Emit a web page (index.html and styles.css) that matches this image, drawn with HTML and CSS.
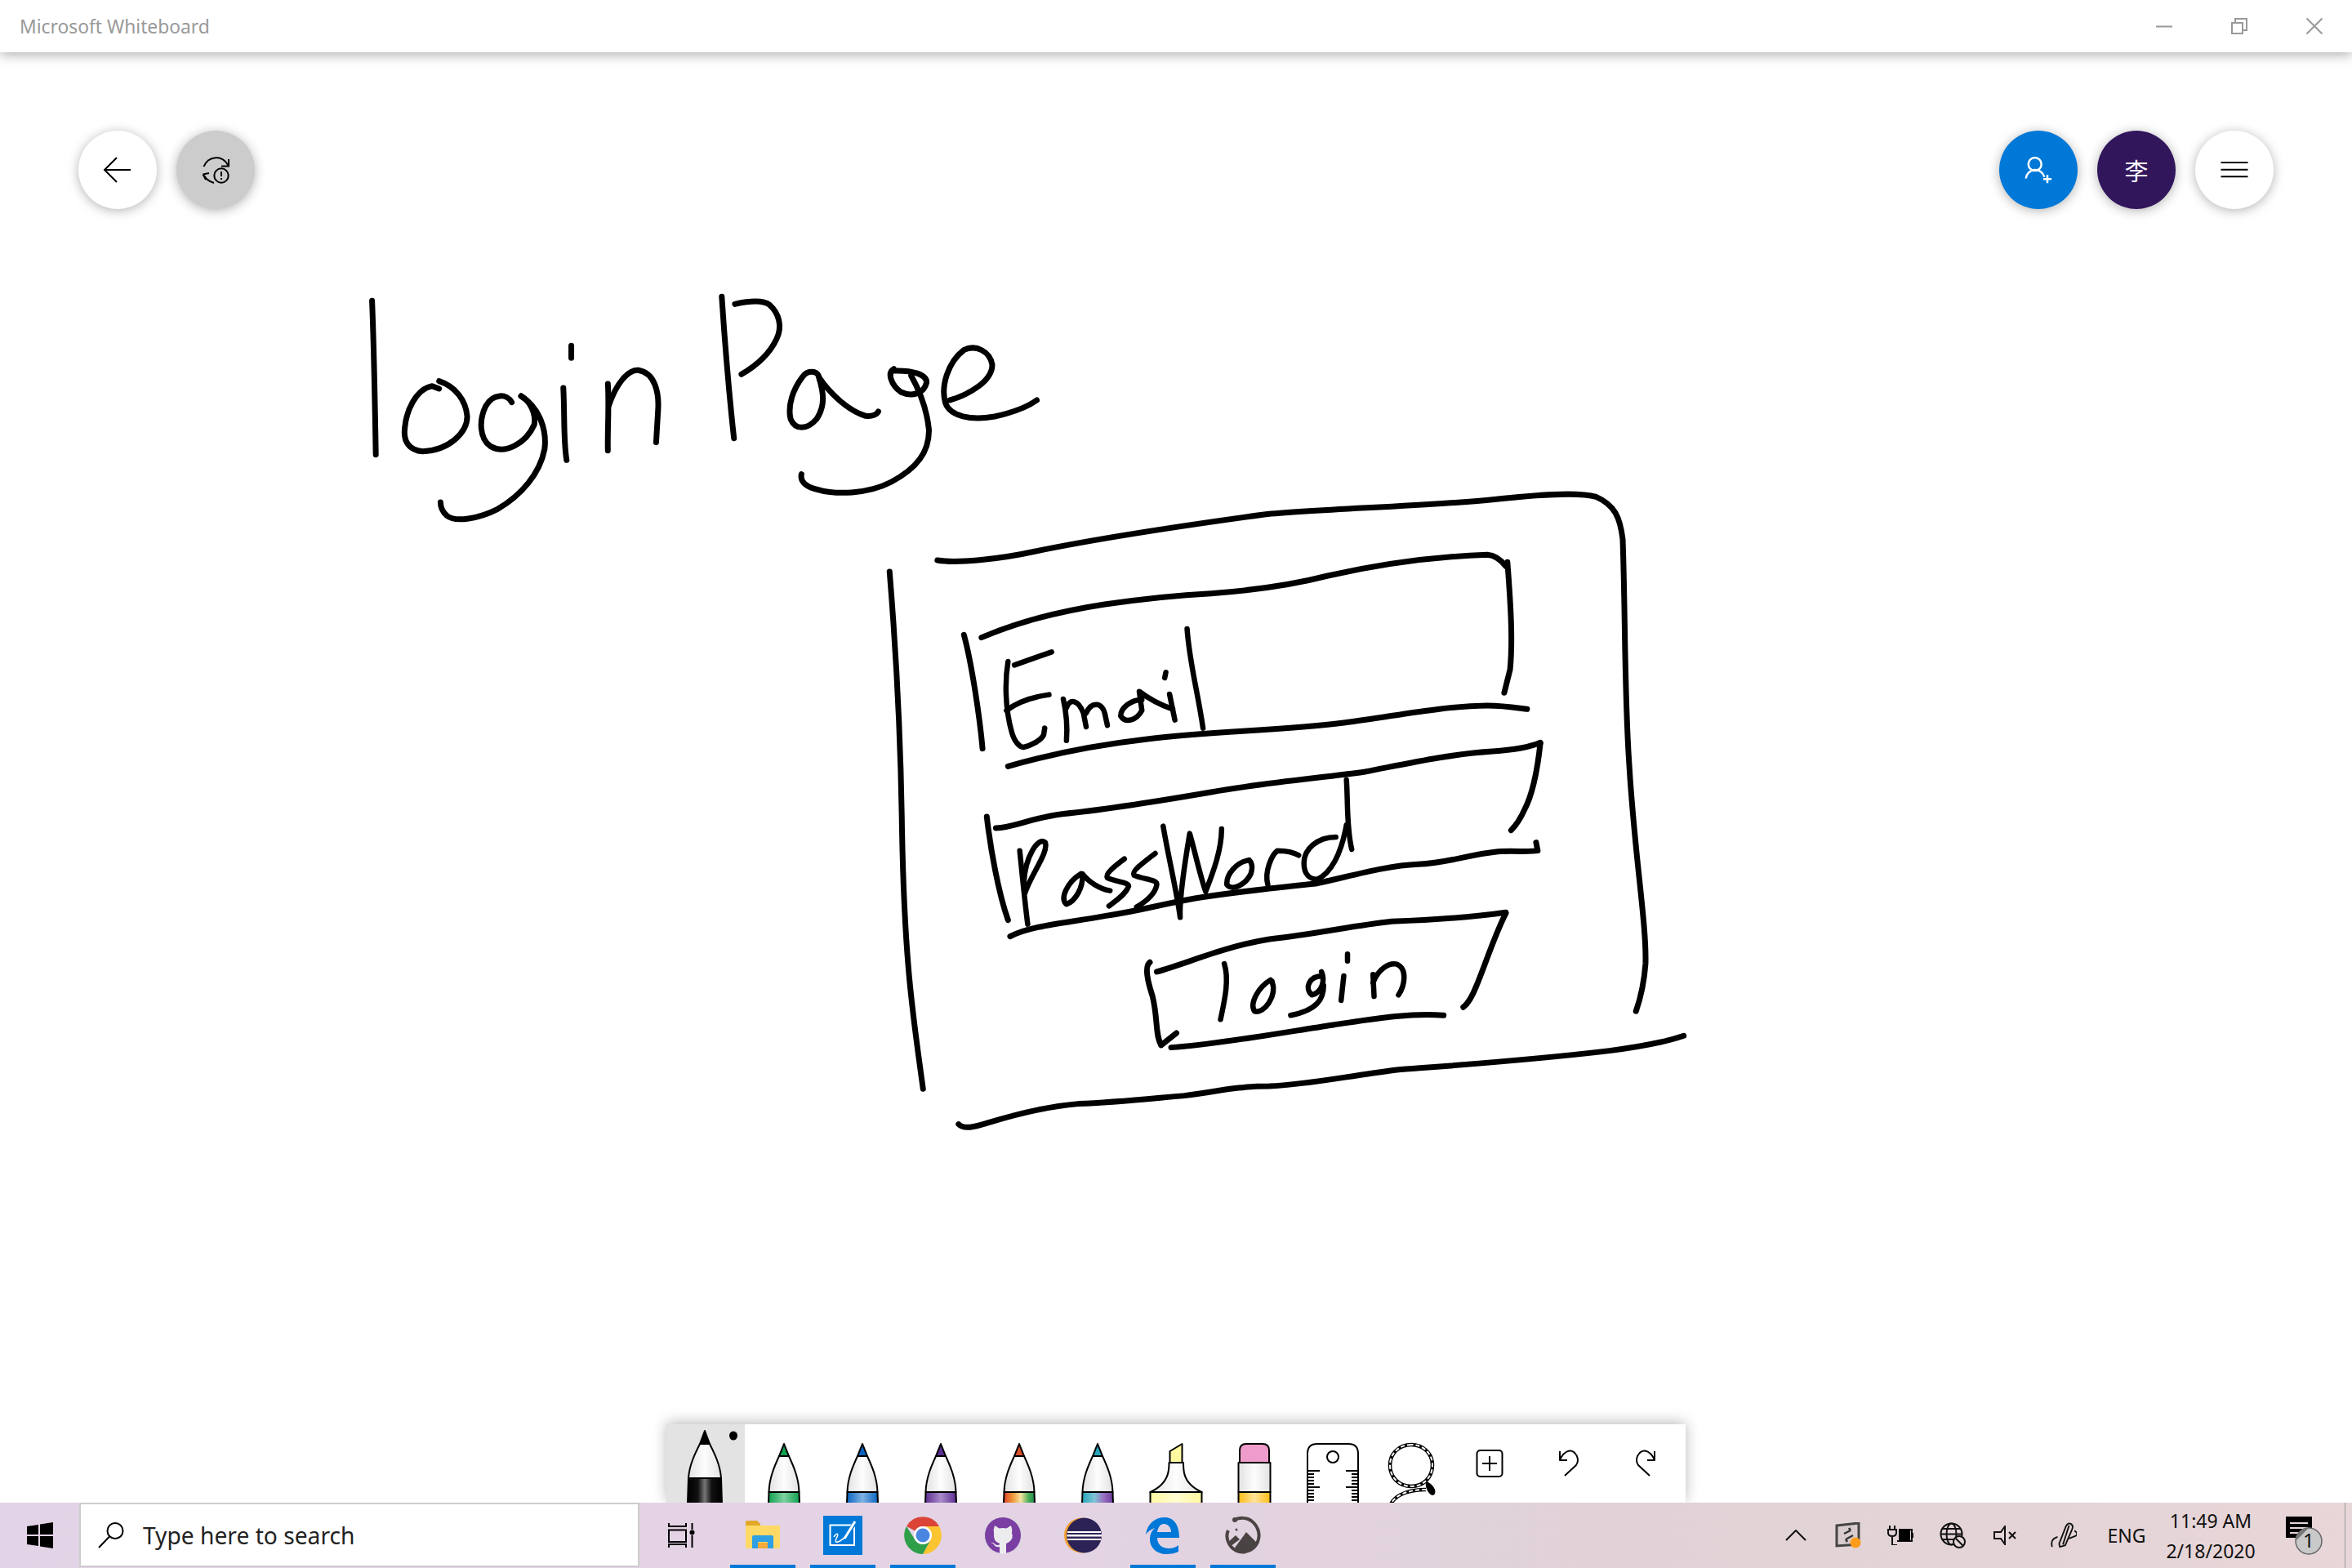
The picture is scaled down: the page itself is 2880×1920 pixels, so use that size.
FILE: index.html
```html
<!DOCTYPE html>
<html lang="en">
<head>
<meta charset="utf-8">
<title>Microsoft Whiteboard</title>
<link rel="stylesheet" href="styles.css">
</head>
<body>
<svg class="defs" aria-hidden="true">
  <defs>
    <linearGradient id="gCone"><stop offset="0" stop-color="#e2e2e2"/><stop offset=".5" stop-color="#fdfdfd"/><stop offset="1" stop-color="#e2e2e2"/></linearGradient>
    <linearGradient id="gBlack"><stop offset="0" stop-color="#000"/><stop offset=".3" stop-color="#111"/><stop offset=".5" stop-color="#777"/><stop offset=".7" stop-color="#111"/><stop offset="1" stop-color="#000"/></linearGradient>
    <linearGradient id="gGreen"><stop offset="0" stop-color="#10a050"/><stop offset=".5" stop-color="#7fd0a0"/><stop offset="1" stop-color="#10a050"/></linearGradient>
    <linearGradient id="gBlue"><stop offset="0" stop-color="#0a64c0"/><stop offset=".5" stop-color="#7fb2e4"/><stop offset="1" stop-color="#0a64c0"/></linearGradient>
    <linearGradient id="gPurple"><stop offset="0" stop-color="#5c2d91"/><stop offset=".5" stop-color="#a98bcb"/><stop offset="1" stop-color="#5c2d91"/></linearGradient>
    <linearGradient id="gRainbow"><stop offset="0" stop-color="#d9402c"/><stop offset=".3" stop-color="#f09a3a"/><stop offset=".55" stop-color="#f5e3a0"/><stop offset=".8" stop-color="#4fae58"/><stop offset="1" stop-color="#1a8a50"/></linearGradient>
    <linearGradient id="gGalaxy"><stop offset="0" stop-color="#25a5b8"/><stop offset=".4" stop-color="#7fc4d4"/><stop offset=".7" stop-color="#9a6ec0"/><stop offset="1" stop-color="#6a3a9a"/></linearGradient>
    <linearGradient id="gYellow"><stop offset="0" stop-color="#fff9a0"/><stop offset=".5" stop-color="#fffdd0"/><stop offset="1" stop-color="#fff9a0"/></linearGradient>
    <linearGradient id="gOrange"><stop offset="0" stop-color="#ffbd14"/><stop offset=".5" stop-color="#ffe29a"/><stop offset="1" stop-color="#ffbd14"/></linearGradient>
  </defs>
</svg>

<div class="window">
  <header class="titlebar">
    <span class="app-title">Microsoft Whiteboard</span>
    <div class="caption-buttons">
      <svg class="caption-icon" viewBox="0 0 20 20"><path d="M0 10.5H20"/></svg>
      <svg class="caption-icon" viewBox="0 0 20 20"><path d="M1 6H14V19H1ZM5 6V1H19V15H14"/></svg>
      <svg class="caption-icon" viewBox="0 0 20 20"><path d="M0.5 0.5L19.5 19.5M19.5 0.5L0.5 19.5"/></svg>
    </div>
  </header>

  <main class="canvas">
    <svg class="ink" viewBox="0 64 2880 1856" role="img" aria-label="Hand-drawn sketch of a login page">
      <g transform="translate(420 340) scale(.574 .3333)">
        <path d="M62 85C66 250 68 450 70 650"/>
        <path d="M205 380C240 400 262 450 265 510C265 570 225 635 170 638C140 635 128 600 132 550C135 490 155 410 190 398L205 408"/>
        <path d="M360 458C350 425 320 425 305 470C290 520 290 590 315 620C345 650 390 610 408 540C412 500 400 455 380 435"/>
        <path d="M380 435C420 480 435 560 430 630C420 720 380 800 330 850C290 885 240 900 222 875C212 860 208 840 208 825"/>
        <path d="M487 250L487 295"/>
        <path d="M470 405C473 500 470 600 477 670"/>
        <path d="M565 390C568 470 564 560 565 635"/>
        <path d="M567 470C585 380 610 338 630 340C665 350 675 420 672 490L668 605"/>
        <path d="M808 70C815 250 825 450 834 590"/>
        <path d="M836 97C860 88 895 80 910 100C930 130 938 180 925 225C910 280 880 325 850 355"/>
        <path d="M1015 362C1010 340 990 340 980 365C960 410 948 470 955 520C965 560 990 560 1010 520C1030 470 1025 420 1015 365C1040 430 1080 490 1115 508C1130 512 1140 500 1142 492"/>
        <path d="M1175 335C1160 350 1170 395 1190 420C1215 440 1240 425 1245 385C1245 355 1215 340 1175 342"/>
        <path d="M1212 360C1225 400 1245 470 1250 560C1250 640 1225 700 1170 750C1120 795 1050 800 1005 775C985 765 975 745 978 722"/>
        <path d="M1295 450C1335 430 1385 380 1385 320C1380 270 1350 245 1325 265C1290 310 1275 400 1285 460C1295 510 1340 525 1390 510C1430 495 1460 475 1480 450"/>
      </g>
      <g transform="translate(1060 580) scale(.6505 .3333)">
        <path d="M135 318C170 330 250 315 320 285C420 245 600 190 750 150C850 130 1050 120 1180 95C1260 78 1340 65 1375 85C1410 115 1420 160 1425 240C1430 500 1428 800 1437 1060C1447 1400 1470 1650 1468 1800C1465 1880 1458 1930 1450 1975"/>
        <path d="M45 360C55 600 65 900 68 1260C72 1800 90 2000 108 2260"/>
        <path d="M218 602C280 550 350 510 450 480C520 460 600 445 650 440C720 430 800 410 870 375C950 340 1060 305 1170 298C1185 300 1195 315 1205 340"/>
        <path d="M1208 325C1215 500 1218 620 1213 720L1202 805"/>
        <path d="M185 592C200 700 215 900 220 1010"/>
        <path d="M268 1075C330 1040 420 1000 530 975C650 945 780 945 900 915C1000 890 1080 855 1170 852C1200 852 1225 860 1245 865"/>
        <path class="fine" d="M280 703L350 655"/>
        <path class="fine" d="M268 690C262 760 262 860 275 950C280 985 290 1005 297 1005C310 1000 330 980 335 960L337 935"/>
        <path class="fine" d="M265 870C285 840 315 820 345 812"/>
        <path class="fine" d="M372 828C378 880 380 930 378 980"/>
        <path class="fine" d="M378 860C385 825 400 830 410 880L415 930"/>
        <path class="fine" d="M415 880C425 835 445 840 450 880L455 925"/>
        <path class="fine" d="M520 830C500 830 480 860 480 890C490 920 510 905 520 870L515 800C535 830 555 850 578 865"/>
        <path class="fine" d="M565 730L563 750"/>
        <path class="fine" d="M572 810L582 905"/>
        <path class="fine" d="M605 570C610 700 625 800 635 935"/>
      </g>
      <g transform="translate(1060 900) scale(.6505 .3333)">
        <path d="M245 342C280 340 310 305 370 290C450 275 560 240 650 210C750 175 870 155 940 135C1020 105 1100 70 1180 60C1220 55 1250 45 1270 28"/>
        <path d="M1270 30C1265 120 1255 220 1240 275C1232 310 1225 330 1215 350"/>
        <path d="M228 300C235 420 250 580 268 680"/>
        <path d="M272 740C310 700 380 690 450 665C520 645 560 620 620 600C700 575 780 560 850 545C920 515 980 480 1040 475C1100 470 1130 440 1190 428C1220 425 1250 430 1265 425L1262 395"/>
        <path class="fine" d="M290 425C295 520 300 620 305 695"/>
        <path class="fine" d="M300 580C312 510 345 430 338 395C325 370 300 450 298 540"/>
        <path class="fine" d="M405 510C380 540 365 600 378 622C395 610 410 560 408 510C420 540 440 565 460 572"/>
        <path class="fine" d="M487 455C470 480 450 510 455 525C470 540 495 540 495 555C490 585 470 610 458 628"/>
        <path class="fine" d="M545 435C525 465 500 500 505 515C520 530 550 530 548 550C545 585 525 615 510 632"/>
        <path class="fine" d="M560 335C570 450 585 570 592 670C590 600 605 420 610 362C620 430 630 520 640 575C655 500 670 420 670 345"/>
        <path class="fine" d="M722 460C700 465 678 510 680 550C690 575 715 550 725 510C730 480 725 465 722 460"/>
        <path class="fine" d="M757 550C750 500 765 440 775 425C790 425 805 430 815 442"/>
        <path class="fine" d="M885 375C850 375 825 420 825 470C825 510 835 530 850 530C875 510 895 440 905 330"/>
        <path class="fine" d="M905 165C908 250 905 340 915 420"/>
        <path d="M548 870C610 835 680 775 760 750C850 730 920 700 990 685C1060 680 1140 670 1205 652"/>
        <path d="M1205 655C1185 730 1165 850 1150 920C1142 960 1135 985 1125 1000"/>
        <path d="M535 835C525 850 530 900 540 960C550 1040 545 1100 556 1140L585 1095"/>
        <path d="M575 1148C650 1140 780 1095 880 1065C950 1045 1020 1020 1088 1030"/>
        <path class="fine" d="M675 840C685 900 675 980 668 1045"/>
        <path class="fine" d="M762 900C740 925 722 985 732 1015C750 1025 775 960 765 905"/>
        <path class="fine" d="M860 885C835 885 825 930 840 955C860 945 865 900 858 870"/>
        <path class="fine" d="M862 920C862 970 850 1010 800 1030"/>
        <path class="fine" d="M907 805L907 830"/>
        <path class="fine" d="M900 885L895 975"/>
        <path class="fine" d="M955 880L957 960"/>
        <path class="fine" d="M955 910C965 860 985 835 1000 842C1020 860 1015 920 1003 955"/>
        <path d="M175 1430C185 1450 205 1440 230 1425C280 1395 340 1365 400 1355C470 1350 540 1335 600 1325C660 1310 700 1290 760 1290C830 1285 900 1255 1000 1230C1100 1215 1250 1195 1400 1160C1460 1145 1510 1125 1540 1105"/>
      </g>
    </svg>

    <div class="float-row">
      <div class="fab-group">
        <div class="fab fab-white">
          <svg class="fab-icon" viewBox="0 0 96 96"><path d="M32 48H64M47 33L32 48L47 63"/></svg>
        </div>
        <div class="fab fab-gray">
          <svg class="fab-icon" viewBox="0 0 96 96"><path d="M33.5 44A16 16 0 0 1 63 42M55 43.5H64V35M32.5 53.5L40 52M32.5 53.5L36 60M34 55Q38 62 46 64"/><circle cx="55" cy="55" r="8.7"/><path d="M55 50V56M55 58V60"/></svg>
        </div>
      </div>
      <div class="fab-group">
        <div class="fab fab-blue">
          <svg class="fab-icon icon-white" viewBox="0 0 96 96"><circle cx="43.7" cy="41" r="8"/><path d="M32.7 58.500A11.500 11.500 0 0 1 55.300 56.700M54 59.300H64M59 54.300V64.300"/></svg>
        </div>
        <div class="fab fab-purple"><span class="avatar-text">李</span></div>
        <div class="fab fab-white">
          <svg class="fab-icon" viewBox="0 0 96 96"><path d="M31.500 39H64.500M31.500 47.700H64.500M31.500 56.300H64.500"/></svg>
        </div>
      </div>
    </div>

    <div class="toolbar">
      <div class="tool tool-selected">
        <svg class="tool-icon" viewBox="0 0 96 96">
          <path fill="url(#gCone)" d="M41 24H53C59 36 66 50 67 66H27C28 50 35 36 41 24Z"/>
          <path fill="#000" d="M41 24L47 8L53 24Z"/>
          <path fill="url(#gBlack)" d="M27 66H67L68 97H26Z"/>
          <ellipse class="solid" cx="82" cy="14" rx="5" ry="5.500"/>
        </svg>
      </div>
      <div class="tool">
        <svg class="tool-icon" viewBox="0 0 96 96"><path fill="url(#gCone)" d="M42 39H54C60 52 66 66 66.500 83H29.500C30 66 36 52 42 39Z"/><path fill="#10a050" d="M42 39L48 24L54 39Z"/><path fill="url(#gGreen)" d="M29.500 83H66.500L67 97H29Z"/></svg>
      </div>
      <div class="tool">
        <svg class="tool-icon" viewBox="0 0 96 96"><path fill="url(#gCone)" d="M42 39H54C60 52 66 66 66.500 83H29.500C30 66 36 52 42 39Z"/><path fill="#0a64c0" d="M42 39L48 24L54 39Z"/><path fill="url(#gBlue)" d="M29.500 83H66.500L67 97H29Z"/></svg>
      </div>
      <div class="tool">
        <svg class="tool-icon" viewBox="0 0 96 96"><path fill="url(#gCone)" d="M42 39H54C60 52 66 66 66.500 83H29.500C30 66 36 52 42 39Z"/><path fill="#5c2d91" d="M42 39L48 24L54 39Z"/><path fill="url(#gPurple)" d="M29.500 83H66.500L67 97H29Z"/></svg>
      </div>
      <div class="tool">
        <svg class="tool-icon" viewBox="0 0 96 96"><path fill="url(#gCone)" d="M42 39H54C60 52 66 66 66.500 83H29.500C30 66 36 52 42 39Z"/><path fill="#d9502c" d="M42 39L48 24L54 39Z"/><path fill="url(#gRainbow)" d="M29.500 83H66.500L67 97H29Z"/></svg>
      </div>
      <div class="tool">
        <svg class="tool-icon" viewBox="0 0 96 96"><path fill="url(#gCone)" d="M42 39H54C60 52 66 66 66.500 83H29.500C30 66 36 52 42 39Z"/><path fill="#25a5b8" d="M42 39L48 24L54 39Z"/><path fill="url(#gGalaxy)" d="M29.500 83H66.500L67 97H29Z"/></svg>
      </div>
      <div class="tool">
        <svg class="tool-icon" viewBox="0 0 96 96"><path fill="#fff9a0" d="M40.500 33L55.500 24V47H40.500Z"/><path fill="url(#gCone)" d="M39.500 47H57C57 58 58 66 66 74C69 77 73 80 79.500 83H16.500C23 80 27 77 30 74C38 66 39.500 58 39.500 47Z"/><path fill="url(#gYellow)" d="M16.500 83H79.500V97H16.500Z"/></svg>
      </div>
      <div class="tool">
        <svg class="tool-icon" viewBox="0 0 96 96"><path fill="#ee9ccb" d="M30 47V32Q30 24 38 24H58Q66 24 66 32V47Z"/><path fill="url(#gCone)" d="M28.500 47H67.500V83H28.500Z"/><path fill="url(#gOrange)" d="M28.500 83H67.500V97H28.500Z"/></svg>
      </div>
      <div class="tool">
        <svg class="tool-icon" viewBox="0 0 96 96"><path fill="#fff" d="M17 100V36Q17 24 29 24H67Q79 24 79 36V100Z"/><ellipse fill="#fff" cx="48" cy="40" rx="7" ry="7"/><path fill="none" d="M17 57H32M17 61H25M17 65H25M17 69H25M17 73H25M17 77H32M17 81H25M17 85H25M17 89H25M17 93H25M79 57H64M79 61H71M79 65H71M79 69H71M79 73H71M79 77H64M79 81H71M79 85H71M79 89H71M79 93H71"/></svg>
      </div>
      <div class="tool">
        <svg class="tool-icon" viewBox="0 0 96 96">
          <path class="rope" d="M48 25C33 25 22 36 22 50C22 65 33 76 48 76C63 76 74 65 74 50C74 36 63 25 48 25ZM68 73C68 80 74 87 75 84C76 80 72 75 68 73ZM66 80C50 80 28 84 22 100"/>
          <path class="rope-dash" d="M48 25C33 25 22 36 22 50C22 65 33 76 48 76C63 76 74 65 74 50C74 36 63 25 48 25ZM66 80C50 80 28 84 22 100"/>
        </svg>
      </div>
      <div class="tool">
        <svg class="tool-icon" viewBox="0 0 96 96"><rect fill="none" x="32.500" y="32" width="31" height="32" rx="4"/><path fill="none" d="M48 39V57M39 48H57"/></svg>
      </div>
      <div class="tool">
        <svg class="tool-icon" viewBox="0 0 96 96"><path fill="none" d="M38 33V44H47M38 44C42 34 50 30 55 34C61 39 61 46 58 50L44 63"/></svg>
      </div>
      <div class="tool">
        <svg class="tool-icon" viewBox="0 0 96 96"><path fill="none" d="M58 33V44H49M58 44C54 34 46 30 41 34C35 39 35 46 38 50L52 63"/></svg>
      </div>
    </div>
  </main>

  <footer class="taskbar">
    <div class="start">
      <svg class="start-logo" viewBox="0 0 32 32"><path d="M0 5L14 3V15H0ZM16 2.500L32 0V15H16ZM0 17H14V29L0 27ZM16 17H32V32L16 29.500Z"/></svg>
    </div>
    <div class="searchbox">
      <svg class="search-icon" viewBox="0 0 32 32"><circle cx="21" cy="10.500" r="9.500"/><path d="M14 17.500L1 31"/></svg>
      <span class="search-text">Type here to search</span>
    </div>
    <div class="taskview">
      <svg class="taskview-icon" viewBox="0 0 33 30"><path d="M1 0V4H22V0M1 8.500H22V23H1ZM1 30V26H22V30M29.500 0V8M29.500 15V30"/><circle class="solid-dot" cx="29.500" cy="11.500" r="3"/></svg>
    </div>

    <div class="app active">
      <svg class="app-icon" viewBox="0 0 48 48"><path fill="#e3a72a" d="M3 8Q3 6 5 6H17L21 10V14H3Z"/><path fill="#ffd966" d="M3 12H45V38Q45 40 43 40H5Q3 40 3 38Z"/><path fill="#2f9fe3" d="M11 40V26Q11 24 13 24H35Q37 24 37 26V40H30V32H18V40Z"/><path fill="#f3a93c" d="M18 33H30V40H18Z"/></svg>
    </div>
    <div class="app active">
      <svg class="app-icon" viewBox="0 0 48 48"><rect fill="#0078d7" width="48" height="48"/><path fill="none" stroke="#fff" stroke-width="2" d="M8.500 11.500H38V36H8.500Z"/><path fill="#0078d7" stroke="#0078d7" stroke-width="5" d="M26 25L40 8"/><path fill="none" stroke="#fff" stroke-width="3" d="M26 28L39 7"/><path fill="none" stroke="#fff" stroke-width="1.500" d="M13 26C17 20 19 22 17 26C15 30 14 33 18 32C22 31 24 28 26 27"/></svg>
    </div>
    <div class="app active">
      <svg class="app-icon" viewBox="0 0 48 48"><path fill="#db4437" d="M4 13A23 23 0 0 1 44 13H24A11 11 0 0 0 14.500 18.500Z"/><path fill="#fbc431" d="M44 13A23 23 0 0 1 24 47L33.500 29.500A11 11 0 0 0 24 13Z"/><path fill="#2e9e48" d="M24 47A23 23 0 0 1 4 13L14.500 29.500A11 11 0 0 0 33.500 29.500Z"/><circle fill="#fff" cx="24" cy="24" r="11"/><circle fill="#4a85e0" cx="24" cy="24" r="8.500"/></svg>
    </div>
    <div class="app">
      <svg class="app-icon" viewBox="0 0 48 48"><circle fill="#7b3ea3" stroke="#ddd" stroke-width="1" cx="24" cy="24" r="22.500"/><path fill="#ececee" d="M14 12L19.500 15.500Q24 14.500 28.500 15.500L34 12Q36 17 35 21Q37 27 33 31Q30 33.500 28 34V46Q24 47 20 46V38Q15 39 13 35Q11 33 9 33Q12 32 14.500 35Q17 36.500 20 35.500V34Q12 32 13 21Q12 17 14 12Z"/></svg>
    </div>
    <div class="app">
      <svg class="app-icon" viewBox="0 0 48 48"><circle fill="#f0a030" cx="22.500" cy="24" r="21.500"/><circle fill="#2c2255" cx="25.500" cy="24" r="21.500"/><path fill="#fff" d="M5 19H46V21H5ZM4.500 23H47V25.500H4.500ZM5 28H46V30H5Z"/></svg>
    </div>
    <div class="app active">
      <svg class="app-icon" viewBox="0 0 48 48"><path fill="#0078d7" fill-rule="evenodd" d="M3 23C5 9 15 2 26 2C38 2 44 12 44 27H17C17 36 24 40 31 40C36 40 40 38.500 43 36V44C39 46 34 47 28 47C16 47 8 39 8 29C8 23 10 19 14 15C9 17 6 19 3 23ZM17 20H34C34 14 30 10 25 10C21 10 18 14 17 20Z"/></svg>
    </div>
    <div class="app active">
      <svg class="app-icon" viewBox="0 0 48 48"><path fill="none" stroke="#4a4343" stroke-width="4" d="M14 5C20 2 28 2 34 6C42 12 46 22 42 32C38 42 26 47 16 43C6 38 2 26 6 18"/><circle fill="#4a4343" cx="14" cy="5" r="3"/><circle fill="#4a4343" cx="16" cy="17" r="1.500"/><path fill="#4a4343" d="M12 42L28 20L41 33C38 42 26 47 16 43Z"/><path fill="#4a4343" d="M5 33L15 24L20 29L8 38Z"/></svg>
    </div>

    <div class="tray">
      <div class="tray-cell"><svg class="tray-icon chevron" viewBox="0 0 26 14"><path d="M1 13L13 1L25 13"/></svg></div>
      <div class="tray-cell"><svg class="tray-icon tall" viewBox="0 0 32 32"><path fill="#d8cccc" stroke-width="3" stroke="#444" d="M2 4L29 1V27L2 29Z"/><path stroke="#333" stroke-width="2.500" d="M11 14L19 10M19 10L17 7M22 16L13 21M13 21L15 24"/><circle fill="#ff9d1b" stroke="none" cx="25" cy="25" r="6.500"/></svg></div>
      <div class="tray-cell"><svg class="tray-icon" viewBox="0 0 32 24"><path d="M3 0V5M9 0V5M1 5H11V9Q11 13 6 13T1 9ZM6 13V24H12M14 5H30V19H12"/><path class="solid" d="M14 5H28V19H14Z"/><path d="M31 9V15"/></svg></div>
      <div class="tray-cell"><svg class="tray-icon tall" viewBox="0 0 32 32"><circle cx="14.500" cy="14.500" r="13"/><ellipse cx="14.500" cy="14.500" rx="6" ry="13"/><path d="M1.500 14.500H27.500M3 8H26M3 21H20"/><circle fill="#e6d5d8" cx="24" cy="24" r="7"/><path d="M19.500 19.500L28.500 28.500"/></svg></div>
      <div class="tray-cell"><svg class="tray-icon" viewBox="0 0 28 24"><path d="M9 8H1V16H9L14 23V1ZM19 8L27 16M27 8L19 16"/></svg></div>
      <div class="tray-cell tray-wide"><svg class="tray-icon tall" viewBox="0 0 34 32"><path d="M11 27L20 4Q23 -1 26 1Q30 3 28 8L19 29L12 31ZM16 28L24 3M2 31Q-1 21 9 18M31 10Q37 14 32 17L24 20"/></svg></div>
      <div class="tray-lang">ENG</div>
      <div class="clock"><span class="clock-line">11:49 AM</span><span class="clock-line">2/18/2020</span></div>
      <div class="notify">
        <svg class="notify-icon" viewBox="0 0 48 48"><path class="solid" d="M2 1H34V27H20L15 33V27H2Z"/><path stroke="#e6d5d8" d="M7 9H29M7 15H29M7 21H29"/><circle fill="#c9c9c9" stroke="#666" stroke-width="1.500" cx="30" cy="31" r="16"/><path fill="#777" stroke="none" d="M30 15A16 16 0 0 0 14 31L30 15Z"/></svg>
        <span class="notify-count">1</span>
      </div>
      <div class="show-desktop"></div>
    </div>
  </footer>
</div>
</body>
</html>
```

FILE: styles.css
```css
* { box-sizing: border-box; }
html, body { margin: 0; padding: 0; }
body { width: 2880px; height: 1920px; overflow: hidden; background: #fff; font-family: "Noto Sans", "Open Sans", sans-serif; }

.defs { position: absolute; width: 0; height: 0; }

.window { display: flex; flex-direction: column; width: 2880px; height: 1920px; }

/* Title bar */
.titlebar { position: relative; z-index: 3; flex: 0 0 64px; display: flex; align-items: center; justify-content: space-between; padding-left: 24px; background: #fff; box-shadow: 0 3px 14px rgba(0,0,0,.32); }
.app-title { font-size: 22.800px; color: #999; }
.caption-buttons { display: flex; gap: 72px; padding-right: 36px; }
.caption-icon { width: 20px; height: 20px; fill: none; stroke: #999; stroke-width: 2; }

/* Canvas */
.canvas { position: relative; flex: 1; display: flex; flex-direction: column; align-items: center; overflow: hidden; padding: 96px 96px 0; }
.ink { position: absolute; left: 0; top: 0; width: 2880px; height: 1856px; fill: none; stroke: #000; stroke-width: 7; stroke-linecap: round; stroke-linejoin: round; }
.ink path { vector-effect: non-scaling-stroke; }
.ink .fine { stroke-width: 6.500; }

.float-row { position: relative; align-self: stretch; display: flex; justify-content: space-between; }
.fab-group { display: flex; gap: 24px; }
.fab { width: 96px; height: 96px; border-radius: 50%; display: flex; align-items: center; justify-content: center; box-shadow: 0 2px 14px rgba(0,0,0,.3); }
.fab-white { background: #fff; }
.fab-gray { background: #ccc; }
.fab-blue { background: #0078d7; }
.fab-purple { background: #32165c; }
.fab-icon { width: 96px; height: 96px; fill: none; stroke: #000; stroke-width: 2; }
.icon-white { stroke: #fff; stroke-width: 2.500; }
.avatar-text { font-family: "Noto Sans CJK SC", "Noto Sans", sans-serif; font-size: 29px; color: #fff; line-height: 1; }

/* Pen toolbar */
.toolbar { position: relative; margin-top: auto; display: flex; background: #fff; box-shadow: 0 -2px 16px rgba(0,0,0,.28); }
.tool { width: 96px; height: 96px; overflow: hidden; }
.tool-selected { background: #e3e3e3; }
.tool-icon { display: block; width: 96px; height: 96px; stroke: #000; stroke-width: 2; stroke-linejoin: round; overflow: hidden; }
.solid { fill: #000; stroke: none; }
.rope { fill: none; stroke: #000; stroke-width: 4.500; }
.rope-dash { fill: none; stroke: #fff; stroke-width: 2; stroke-dasharray: 5 3; }

/* Taskbar */
.taskbar { position: relative; z-index: 2; flex: 0 0 80px; display: flex; background: linear-gradient(90deg, #e3d3e6 0%, #e3d3e4 45%, #e0d2d6 70%, #e8d6d8 100%); }
.start { flex: 0 0 97px; display: flex; align-items: center; justify-content: center; }
.start-logo { width: 32px; height: 32px; fill: #000; }
.searchbox { flex: 0 0 686px; display: flex; align-items: center; gap: 23px; padding-left: 21px; background: #fff; border: 2px solid #ccc; margin-bottom: 1px; }
.search-icon { width: 32px; height: 32px; fill: none; stroke: #000; stroke-width: 2; }
.search-text { font-size: 28.200px; color: #222; }
.taskview { flex: 0 0 102px; display: flex; align-items: center; justify-content: center; }
.taskview-icon { width: 33px; height: 30px; fill: none; stroke: #000; stroke-width: 2; }
.solid-dot { fill: #000; stroke: none; }

.app { flex: 0 0 98px; display: flex; align-items: center; justify-content: center; position: relative; }
.app-icon { width: 48px; height: 48px; }
.active::after { content: ""; position: absolute; left: 9px; right: 9px; bottom: 0; height: 4px; background: #0078d7; }

.tray { margin-left: auto; display: flex; align-items: center; height: 80px; }
.tray-cell { flex: 0 0 64px; display: flex; align-items: center; justify-content: center; }
.tray-wide { flex-basis: 80px; }
.tray-icon { width: 32px; height: 24px; fill: none; stroke: #111; stroke-width: 2; }
.tall { height: 32px; }
.chevron { width: 26px; height: 14px; }
.tray-lang { flex: 0 0 74px; text-align: center; font-size: 23px; color: #111; }
.clock { flex: 0 0 132px; display: flex; flex-direction: column; align-items: center; gap: 5px; font-size: 23px; color: #111; line-height: 32px; }
.clock-line { display: block; white-space: nowrap; }
.notify { position: relative; flex: 0 0 96px; height: 80px; display: flex; align-items: center; justify-content: center; }
.notify-icon { width: 48px; height: 48px; fill: none; stroke-width: 2; }
.notify-count { position: absolute; left: 47px; top: 30px; font-size: 24px; line-height: 32px; color: #111; }
.show-desktop { flex: 0 0 11px; height: 80px; position: relative; }
.show-desktop::before { content: ""; position: absolute; left: 2px; top: 0; bottom: 0; width: 1px; background: #999; }
```
